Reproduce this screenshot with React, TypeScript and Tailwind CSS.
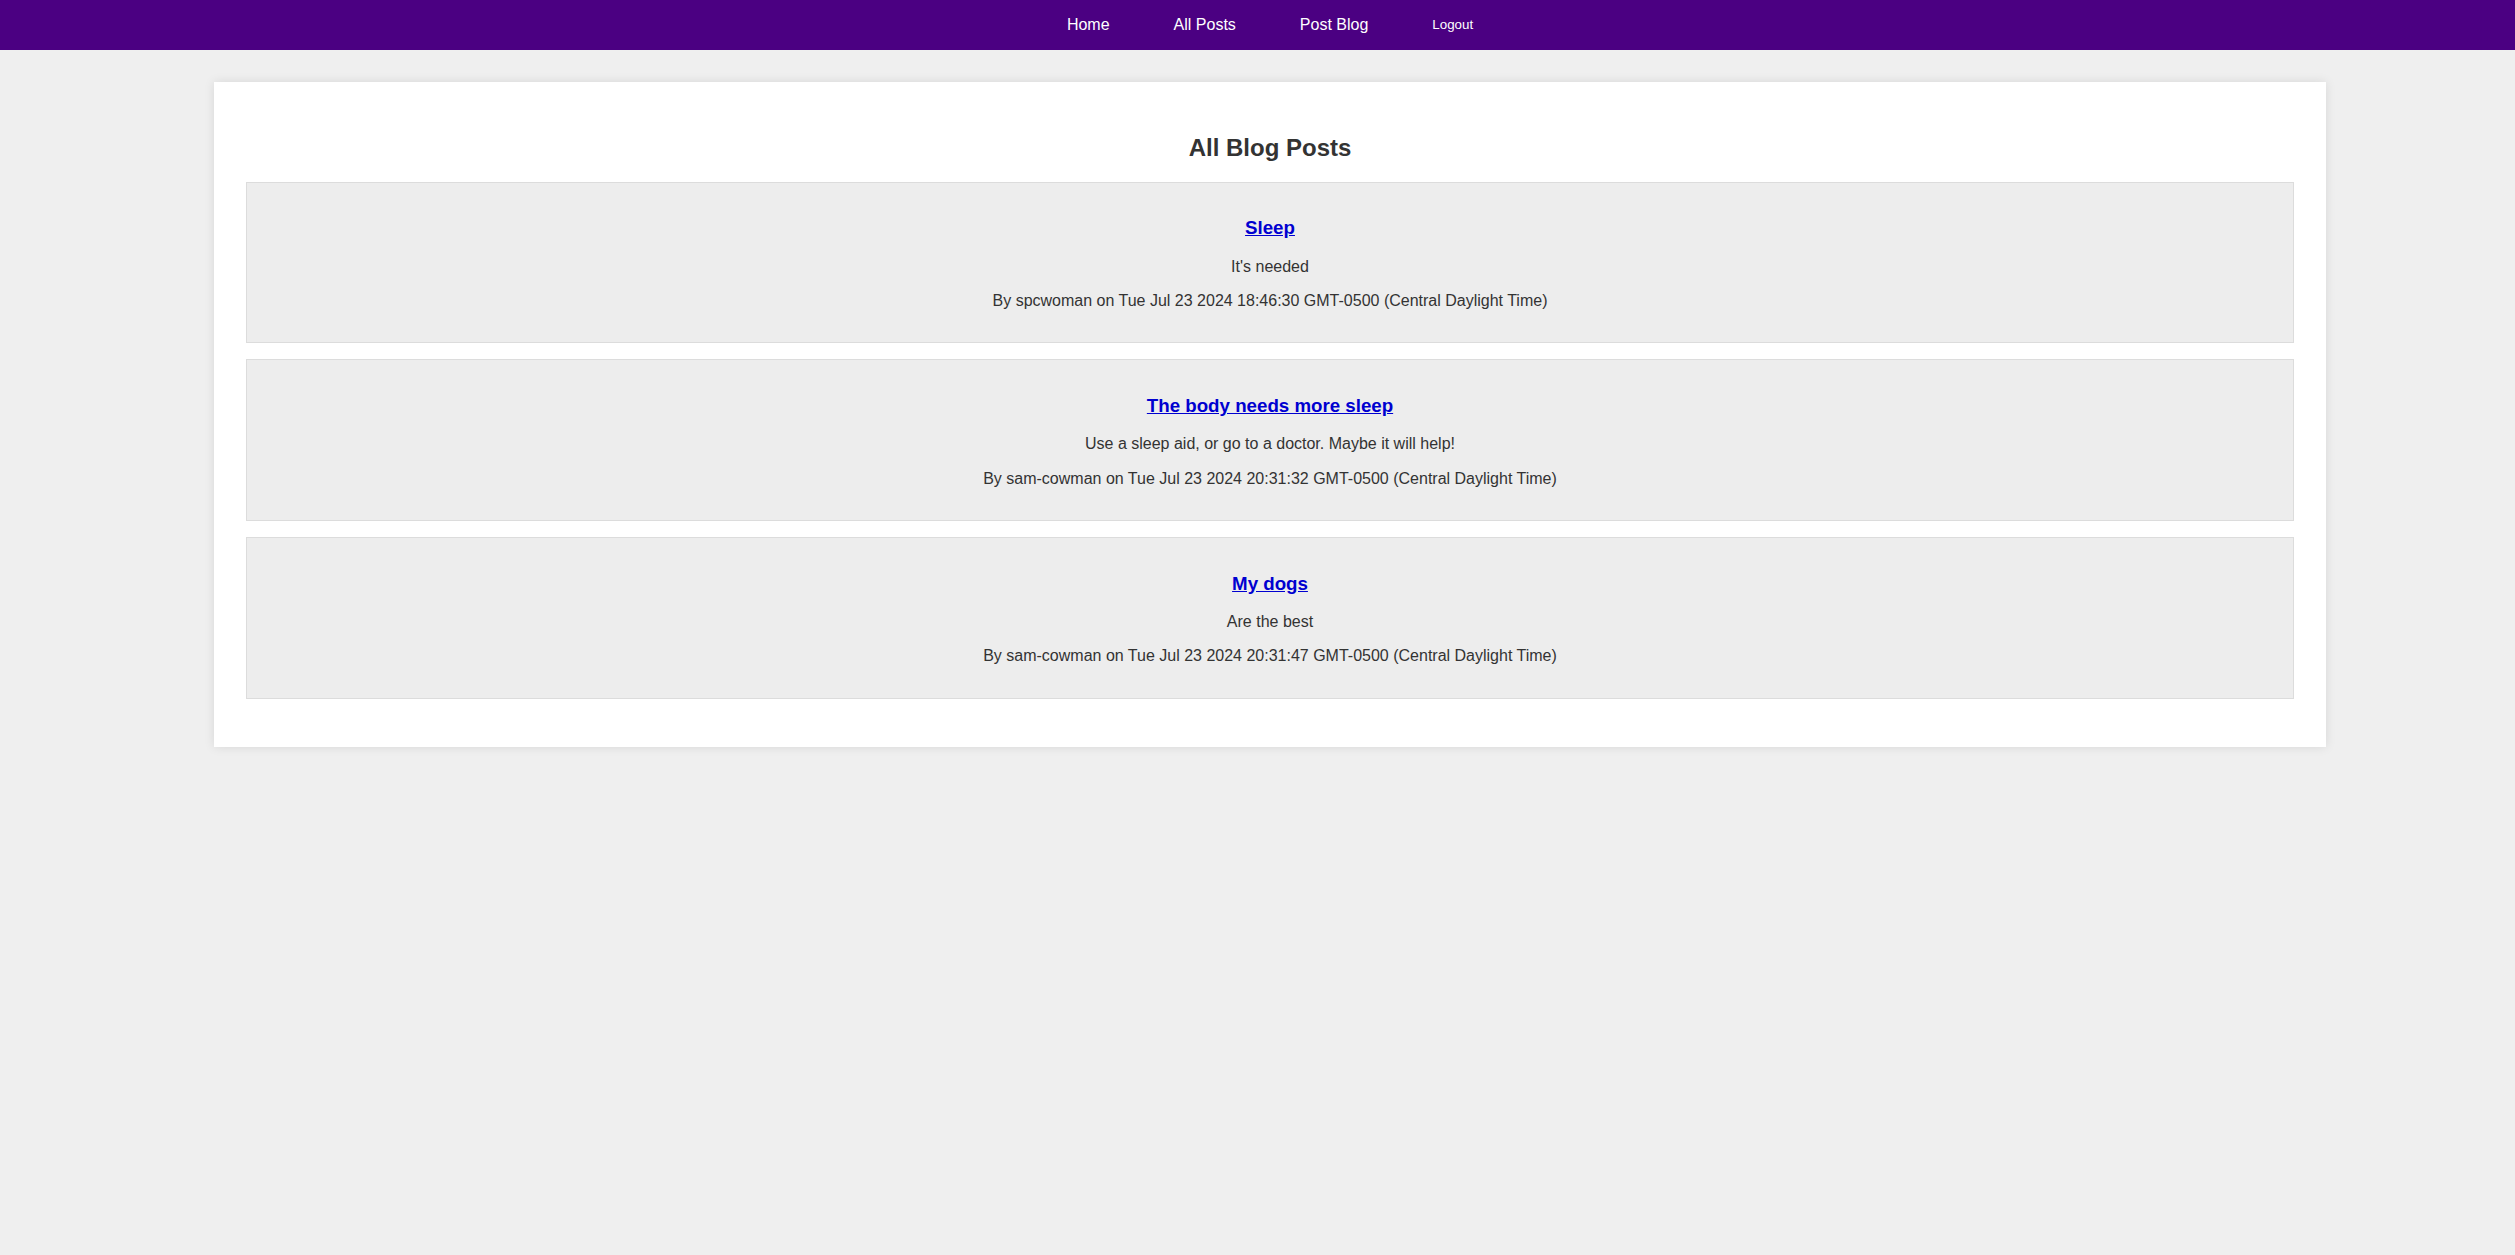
const posts = [
  {
    id: 1,
    title: "Sleep",
    body: "It's needed",
    author: "spcwoman",
    date: "Tue Jul 23 2024 18:46:30 GMT-0500 (Central Daylight Time)",
  },
  {
    id: 2,
    title: "The body needs more sleep",
    body: "Use a sleep aid, or go to a doctor. Maybe it will help!",
    author: "sam-cowman",
    date: "Tue Jul 23 2024 20:31:32 GMT-0500 (Central Daylight Time)",
  },
  {
    id: 3,
    title: "My dogs",
    body: "Are the best",
    author: "sam-cowman",
    date: "Tue Jul 23 2024 20:31:47 GMT-0500 (Central Daylight Time)",
  },
];

export default function App() {
  return (
    <div className="min-h-screen bg-[#efefef] text-[#333] leading-[1.15] font-['Liberation_Sans',Arial,sans-serif]">
      {/* NAV */}
      <nav className="h-[50px] bg-[#4b0082] flex items-center justify-center pl-[25px] gap-16 text-white">
        <a href="#" className="text-[16px]">Home</a>
        <a href="#" className="text-[16px]">All Posts</a>
        <a href="#" className="text-[16px]">Post Blog</a>
        <button className="text-[13.33px] text-white bg-transparent">Logout</button>
      </nav>

      {/* CONTENT */}
      <div className="pl-[25px] pt-8">
        <div className="w-[2112px] mx-auto bg-white p-8 shadow-[0_0_10px_rgba(0,0,0,0.1)]">
          <h2 className="text-[24px] font-bold text-center mt-[20px] mb-[20px]">All Blog Posts</h2>

          {posts.map((post) => (
            <div key={post.id} className="bg-[#ededed] border border-[#dcdcdc] p-4 mb-4 text-center">
              <h3 className="text-[18.72px] font-bold my-[18.72px]">
                <a href="#" className="text-[#0000d0] underline">{post.title}</a>
              </h3>
              <p className="text-[16px] my-4">{post.body}</p>
              <p className="text-[16px] my-4">
                By {post.author} on {post.date}
              </p>
            </div>
          ))}
        </div>
      </div>
    </div>
  );
}
